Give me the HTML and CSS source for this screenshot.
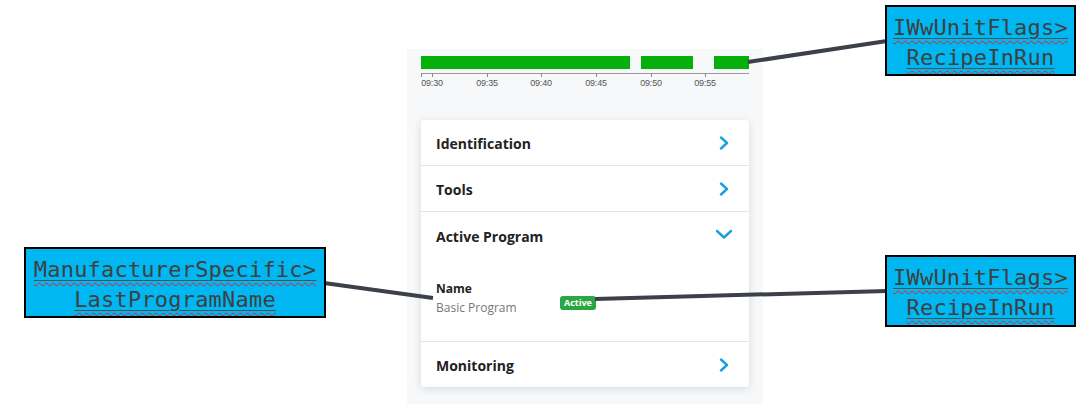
FILE: index.html
```html
<!DOCTYPE html>
<html>
<head>
<meta charset="utf-8">
<link rel="stylesheet" href="styles.css">
</head>
<body>
<div class="stage">
  <div class="panel">
    <div class="chart">
      <div class="bar" style="left:0;width:209px"></div>
      <div class="bar" style="left:220px;width:52px"></div>
      <div class="bar" style="left:293px;width:35px"></div>
      <div class="axis"></div>
      <div class="tick" style="left:0"></div>
      <div class="tick" style="left:11px"></div>
      <div class="tick" style="left:66px"></div>
      <div class="tick" style="left:120px"></div>
      <div class="tick" style="left:175px"></div>
      <div class="tick" style="left:230px"></div>
      <div class="tick" style="left:284px"></div>
      <div class="label" style="left:11px">09:30</div>
      <div class="label" style="left:66px">09:35</div>
      <div class="label" style="left:120px">09:40</div>
      <div class="label" style="left:175px">09:45</div>
      <div class="label" style="left:230px">09:50</div>
      <div class="label" style="left:284px">09:55</div>
    </div>
    <div class="card">
      <div class="row">
        <span class="row-title">Identification</span>
        <svg class="chev" width="12" height="14" viewBox="0 0 12 14"><path d="M3 1.5 L9 7 L3 12.5" fill="none" stroke="#1a9fe0" stroke-width="2.4" stroke-linecap="round" stroke-linejoin="round"/></svg>
      </div>
      <div class="row">
        <span class="row-title">Tools</span>
        <svg class="chev" width="12" height="14" viewBox="0 0 12 14"><path d="M3 1.5 L9 7 L3 12.5" fill="none" stroke="#1a9fe0" stroke-width="2.4" stroke-linecap="round" stroke-linejoin="round"/></svg>
      </div>
      <div class="row row-open">
        <span class="row-title">Active Program</span>
        <svg class="chev-down" width="18" height="12" viewBox="0 0 18 12"><path d="M2 3 L9 9.5 L16 3" fill="none" stroke="#1a9fe0" stroke-width="2.4" stroke-linecap="round" stroke-linejoin="round"/></svg>
      </div>
      <div class="detail">
        <div class="field">
          <div class="field-name">Name</div>
          <div class="field-value">Basic Program</div>
        </div>
        <span class="badge">Active</span>
      </div>
      <div class="row row-last">
        <span class="row-title">Monitoring</span>
        <svg class="chev" width="12" height="14" viewBox="0 0 12 14"><path d="M3 1.5 L9 7 L3 12.5" fill="none" stroke="#1a9fe0" stroke-width="2.4" stroke-linecap="round" stroke-linejoin="round"/></svg>
      </div>
    </div>
  </div>

  <svg class="connectors" width="1090" height="418" viewBox="0 0 1090 418">
    <line x1="748" y1="62" x2="887" y2="41" stroke="#3b4049" stroke-width="4"/>
    <line x1="324" y1="283" x2="433" y2="298" stroke="#3b4049" stroke-width="4"/>
    <line x1="595" y1="299" x2="887" y2="291" stroke="#3b4049" stroke-width="4"/>
  </svg>

  <div class="callout callout-top">
    <span class="ul"><span class="sq">IWwUnitFlags&gt;</span></span><br>
    <span class="ul"><span class="sq">RecipeInRun</span></span>
  </div>
  <div class="callout callout-left">
    <span class="ul"><span class="sq">ManufacturerSpecific&gt;</span></span><br>
    <span class="ul"><span class="sq">LastProgramName</span></span>
  </div>
  <div class="callout callout-bottom">
    <span class="ul"><span class="sq">IWwUnitFlags&gt;</span></span><br>
    <span class="ul"><span class="sq">RecipeInRun</span></span>
  </div>
</div>
</body>
</html>
```

FILE: styles.css
```css
html, body {
  margin: 0;
  padding: 0;
  background: #ffffff;
}

.stage {
  position: relative;
  width: 1090px;
  height: 418px;
  padding-top: 49px;
  box-sizing: border-box;
  overflow: hidden;
}

.panel {
  margin-left: 407px;
  width: 356px;
  height: 355px;
  background: #f7f8fa;
  padding: 7px 14px 0 14px;
  box-sizing: border-box;
}

.chart {
  position: relative;
  width: 328px;
  height: 64px;
}

.bar {
  position: absolute;
  top: 0;
  height: 13px;
  background: #05b00d;
}

.axis {
  position: absolute;
  left: 0;
  top: 17px;
  width: 328px;
  height: 1px;
  background: #9a9a9a;
}

.tick {
  position: absolute;
  top: 17px;
  width: 1px;
  height: 4px;
  background: #8a8a8a;
}

.label {
  position: absolute;
  top: 22px;
  transform: translateX(-50%);
  font-family: "Liberation Sans", Arial, sans-serif;
  font-size: 9px;
  line-height: 11px;
  color: #555;
  letter-spacing: -0.2px;
}

.card {
  background: #ffffff;
  border-radius: 3px;
  box-shadow: 0 2px 8px rgba(0, 0, 0, 0.12);
  width: 328px;
  font-family: "Open Sans", "Noto Sans", sans-serif;
}

.row {
  display: flex;
  align-items: center;
  justify-content: space-between;
  height: 45px;
  padding: 0 18px 0 15px;
  border-bottom: 1px solid #e4e4e4;
}

.row-open {
  height: 46px;
  border-bottom: none;
}

.row-last {
  border-bottom: none;
  height: 45px;
}

.row-title {
  font-size: 14px;
  font-weight: 700;
  color: #222;
  padding-top: 2px;
}

.chev {
  margin-right: 1px;
}

.chev-down {
  margin-right: -2px;
  margin-top: -3px;
}

.detail {
  height: 84px;
  border-bottom: 1px solid #e4e4e4;
  display: flex;
  align-items: center;
  padding: 0 15px;
  box-sizing: border-box;
}

.field {
  width: 124px;
  margin-top: -3px;
}

.field-name {
  font-size: 12px;
  font-weight: 700;
  color: #222;
  line-height: 20px;
}

.field-value {
  font-size: 12px;
  color: #777;
  line-height: 18px;
}

.badge {
  background: #2aa745;
  color: #fff;
  font-size: 9px;
  font-weight: 700;
  line-height: 14px;
  height: 14px;
  padding: 0 4px;
  border-radius: 3px;
  margin-top: 6px;
}

.connectors {
  position: absolute;
  left: 0;
  top: 0;
}

.callout {
  position: absolute;
  background: #00b7f1;
  border: 2px solid #000;
  box-sizing: border-box;
  font-family: "DejaVu Sans Mono", "Liberation Mono", monospace;
  font-size: 22px;
  line-height: 30px;
  color: #404040;
  text-align: center;
  padding-top: 6px;
  letter-spacing: 0.2px;
}

.callout-top {
  left: 885px;
  top: 5px;
  width: 191px;
  height: 71px;
}

.callout-left {
  left: 24px;
  top: 247px;
  width: 302px;
  height: 71px;
}

.callout-bottom {
  left: 885px;
  top: 255px;
  width: 191px;
  height: 72px;
}

.ul {
  text-decoration: underline solid #505050 1px;
  text-underline-offset: 3px;
}

.sq {
  text-decoration: underline wavy #e0202a 1px;
  text-underline-offset: 5px;
}
```
